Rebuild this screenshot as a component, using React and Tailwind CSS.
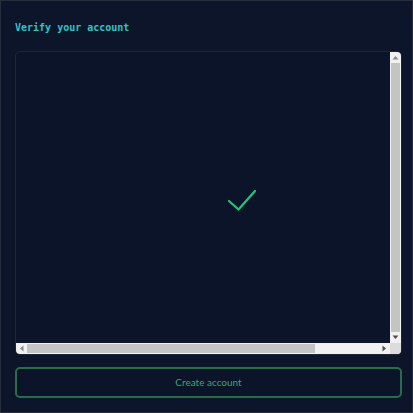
import React from 'react';

const ArrowUp = () => (
    <svg width="7" height="5" viewBox="0 0 7 5"><path d="M0.5 4.5 L3.5 1 L6.5 4.5 Z" fill="#8a8a8a" /></svg>
);
const ArrowDown = () => (
    <svg width="7" height="5" viewBox="0 0 7 5"><path d="M0.5 0.5 L3.5 4 L6.5 0.5 Z" fill="#505050" /></svg>
);
const ArrowLeft = () => (
    <svg width="5" height="7" viewBox="0 0 5 7"><path d="M4.5 0.5 L1 3.5 L4.5 6.5 Z" fill="#8a8a8a" /></svg>
);
const ArrowRight = () => (
    <svg width="5" height="7" viewBox="0 0 5 7"><path d="M0.5 0.5 L4 3.5 L0.5 6.5 Z" fill="#505050" /></svg>
);

export default function App() {
    return (
        <div className="w-[413px] h-[413px] bg-[#0c1529] border border-[#262e3d] flex flex-col pl-[14px] pr-[10px] pt-[20px] pb-[14px]">
            <div
                className="text-[10px] leading-[14px] font-bold text-[#2cc3c7]"
                style={{ fontFamily: '"DejaVu Sans Mono", "Liberation Mono", monospace' }}
            >
                Verify your account
            </div>

            <div className="mt-[16px] h-[304px] rounded-[5px] border border-[#1d2739] bg-[#0b1428] overflow-hidden flex flex-col">
                <div className="flex-1 flex min-h-0">
                    <div className="flex-1 flex items-center justify-center pl-[78px] pt-[4px]">
                        <svg width="30" height="24" viewBox="0 0 30 24" fill="none">
                            <path d="M2 13 L11.5 21.5 L28 3" stroke="#25c47c" strokeWidth="2.2" strokeLinecap="round" strokeLinejoin="round" />
                        </svg>
                    </div>
                    <div className="w-[11px] bg-[#f1f1f1] flex flex-col">
                        <div className="h-[11px] flex items-center justify-center"><ArrowUp /></div>
                        <div className="flex-1 mx-[1px] bg-[#c4c4c4]" />
                        <div className="h-[11px] flex items-center justify-center"><ArrowDown /></div>
                    </div>
                </div>
                <div className="h-[11px] flex bg-[#f1f1f1]">
                    <div className="w-[11px] flex items-center justify-center"><ArrowLeft /></div>
                    <div className="w-[288px] my-[1px] bg-[#c4c4c4]" />
                    <div className="flex-1" />
                    <div className="w-[11px] flex items-center justify-center"><ArrowRight /></div>
                    <div className="w-[11px] bg-[#dcdcdc]" />
                </div>
            </div>

            <button
                className="mt-[12px] h-[31px] w-full rounded-[5px] border-2 border-[#2c6a4c] bg-[#0b1428] text-[10px] text-[#3aa86a] flex items-center justify-center"
                style={{ fontFamily: 'Lato, "Open Sans", sans-serif' }}
            >
                Create account
            </button>
        </div>
    );
}
